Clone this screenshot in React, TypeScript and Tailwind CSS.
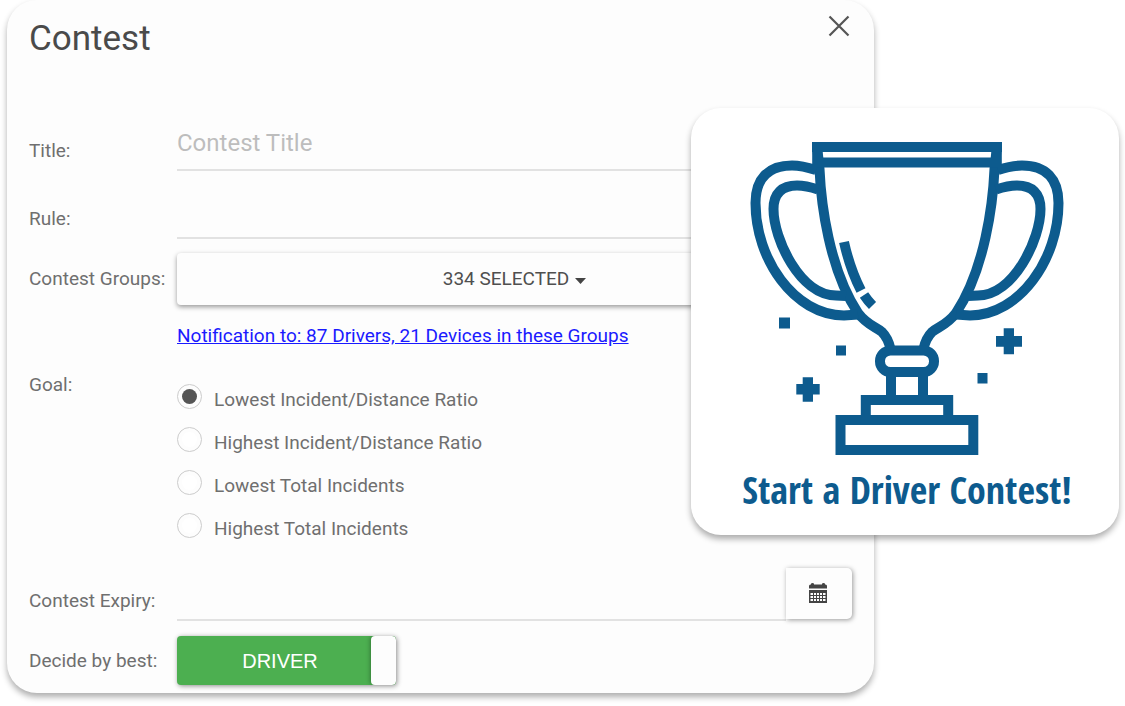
import { useState } from 'react';

const goals = [
  'Lowest Incident/Distance Ratio',
  'Highest Incident/Distance Ratio',
  'Lowest Total Incidents',
  'Highest Total Incidents',
];

const labelClass = 'w-[148px] shrink-0 text-[19px] leading-[26px] text-[#6f6f6f]';
const inputClass =
  'min-w-0 flex-1 border-b-2 border-[#e2e2e2] bg-transparent text-[#555555] outline-none placeholder:text-[#bdbdbd] placeholder:opacity-100';

function CloseIcon() {
  return (
    <svg width="22" height="22" viewBox="0 0 22 22" fill="none" stroke="#555555" strokeWidth="2.2">
      <path d="M1.5 1.5 L20.5 20.5 M20.5 1.5 L1.5 20.5" />
    </svg>
  );
}

function CalendarIcon() {
  return (
    <svg width="18" height="20" viewBox="0 0 18 20" fill="#444444">
      <path d="M0 5.5V3Q0 1.5 1.5 1.5H2V1Q2 0 3.5 0T5 1V1.5H13V1Q13 0 14.5 0T16 1V1.5H16.5Q18 1.5 18 3V5.5Z" />
      <path
        fillRule="evenodd"
        d="M0 7H18V20H0Z M1.5 10V12H4V10Z M5 10V12H7V10Z M8 10V12H10V10Z M11 10V12H13V10Z M14 10V12H16.500V10Z M1.5 13V15H4V13Z M5 13V15H7V13Z M8 13V15H10V13Z M11 13V15H13V13Z M14 13V15H16.500V13Z M1.5 16V18H4V16Z M5 16V18H7V16Z M8 16V18H10V16Z M11 16V18H13V16Z M14 16V18H16.500V16Z"
      />
    </svg>
  );
}

// left half of the cup, mirrored for the right side
function CupSide() {
  return (
    <>
      <path d="M67 5 L69.5 28 C71 62 79 128 108 172 C117 184 126 186 132 191 C137 196 139 201 140.5 208" />
      <path d="M66 29 Q52 24.5 42 24.5 C18 24.5 5.5 38 5.5 62 C5.5 118 44 174 94 174.5 L108 173.5" />
      <path d="M68 48.5 Q56 44.5 47 44.5 C32 44.5 23.5 52 23.5 68 C23.5 98 50 154 86 154.5 L96 155" />
    </>
  );
}

function Trophy() {
  return (
    <svg width="314" height="315" viewBox="0 0 314 315" fill="none" stroke="#0d5b8e" strokeWidth="10">
      <CupSide />
      <g transform="translate(314 0) scale(-1 1)">
        <CupSide />
      </g>
      <path d="M62 6H252 M67 21.5H247 M67.2 1V25 M246.8 1V25" />
      <path d="M94 101 Q100 128 111 149.5 M114 154 Q118 160 122.5 164.5" />
      <rect x="130" y="209.5" width="54" height="21.5" rx="10.5" />
      <path d="M141 233V256 M173 233V256" />
      <rect x="115.8" y="259" width="82.4" height="20" />
      <rect x="90.5" y="279" width="132.8" height="30" />
      <g fill="#0d5b8e" stroke="none">
        <rect x="29" y="176.5" width="11" height="11" />
        <rect x="86" y="204.5" width="10" height="10" />
        <rect x="227.5" y="232" width="10" height="10.5" />
        <path d="M253.7 187.3H264V195H272V205.7H264V213.3H253.7V205.7H246V195H253.7Z" />
        <path d="M52.7 236.3H63V243H69.7V253.5H63V260.7H52.7V253.5H46.3V243H52.7Z" />
      </g>
    </svg>
  );
}

export default function App() {
  const [title, setTitle] = useState('');
  const [rule, setRule] = useState('');
  const [expiry, setExpiry] = useState('');
  const [goal, setGoal] = useState(goals[0]);
  const [byDriver, setByDriver] = useState(true);

  return (
    <div className="flex min-h-screen items-start bg-white pr-[6px] pb-3 pl-[7px] font-['Roboto',sans-serif]">
      <form className="min-w-0 flex-1 rounded-[30px] bg-[#fdfdfd] px-[22px] pb-2 shadow-[0_4px_6px_rgba(0,0,0,0.32)]">
        <header className="flex h-[113px] items-start justify-between pt-[15px]">
          <h1 className="text-[35px] leading-[48px] text-[#4a4a4a]">Contest</h1>
          <button type="button" aria-label="Close" className="mr-0.5">
            <CloseIcon />
          </button>
        </header>

        <div className="flex h-[58px] items-end">
          <label htmlFor="title" className={`${labelClass} pb-[7px]`}>Title:</label>
          <input
            id="title"
            value={title}
            onChange={(e) => setTitle(e.target.value)}
            placeholder="Contest Title"
            className={`${inputClass} h-[58px] pt-1 text-[24px]`}
          />
        </div>

        <div className="flex h-[68px] items-end">
          <label htmlFor="rule" className={`${labelClass} pb-[7px]`}>Rule:</label>
          <input
            id="rule"
            value={rule}
            onChange={(e) => setRule(e.target.value)}
            className={`${inputClass} h-[58px] pt-1 text-[24px]`}
          />
        </div>

        <div className="mt-[14px] flex items-center">
          <label htmlFor="groups" className={labelClass}>Contest Groups:</label>
          <button
            id="groups"
            type="button"
            aria-haspopup="listbox"
            className="flex h-[52px] flex-1 items-center justify-center gap-1.5 rounded bg-[#fdfdfd] text-[19px] text-[#4f4f4f] shadow-[0_2px_5px_rgba(0,0,0,0.4)]"
          >
            334 SELECTED
            <svg width="11" height="6" viewBox="0 0 11 6" fill="#444444" className="mt-1">
              <path d="M0 0H11L5.5 6Z" />
            </svg>
          </button>
        </div>

        <div className="mt-[18px] ml-[148px] text-[19px] leading-[26px]">
          <a href="#groups" className="text-[#1a1aff] underline">
            Notification to: 87 Drivers, 21 Devices in these Groups
          </a>
        </div>

        <div role="radiogroup" aria-labelledby="goal" className="mt-[23px] flex items-start">
          <span id="goal" className={labelClass}>Goal:</span>
          <div className="pt-[3px]">
            {goals.map((item) => (
              <label key={item} className="flex h-[43px] items-center gap-3 text-[19px] text-[#6f6f6f]">
                <input
                  type="radio"
                  name="goal"
                  checked={goal === item}
                  onChange={() => setGoal(item)}
                  className="size-[25px] appearance-none rounded-full border border-[#cccccc] bg-white bg-clip-content p-1 checked:bg-[#555555]"
                />
                <span className="pt-2">{item}</span>
              </label>
            ))}
          </div>
        </div>

        <div className="mt-[21px] flex h-[53px] items-end">
          <label htmlFor="expiry" className={`${labelClass} pb-[7px]`}>Contest Expiry:</label>
          <input
            id="expiry"
            value={expiry}
            onChange={(e) => setExpiry(e.target.value)}
            className={`${inputClass} h-[53px] text-[24px]`}
          />
          <button
            type="button"
            aria-label="Pick a date"
            className="flex h-[51px] w-[66px] items-center justify-center self-start rounded-r-[5px] bg-[#fdfdfd] pr-0.5 pb-0.5 shadow-[1px_1px_5px_rgba(0,0,0,0.4)]"
          >
            <CalendarIcon />
          </button>
        </div>

        <div className="mt-[15px] flex items-center">
          <label htmlFor="decide" className={labelClass}>Decide by best:</label>
          <button
            id="decide"
            type="button"
            role="switch"
            aria-checked={byDriver}
            onClick={() => setByDriver(!byDriver)}
            className="flex h-[49px] w-[219px] items-stretch overflow-hidden rounded bg-[#4caf50] font-['Liberation_Sans',sans-serif] text-[20px] text-white shadow-[1px_1px_5px_rgba(0,0,0,0.45)]"
          >
            <span className="flex flex-1 items-center justify-center pl-3">{byDriver ? 'DRIVER' : 'DEVICE'}</span>
            <span className="w-[25px] rounded bg-[#fdfdfd] shadow-[-1px_0_4px_rgba(0,0,0,0.3)]" />
          </button>
        </div>
      </form>

      <aside className="z-10 mt-[108px] -ml-[183px] flex w-[428px] shrink-0 flex-col items-center rounded-[30px] bg-white pt-[33px] pb-[25px] pl-1 shadow-[0_4px_6px_rgba(0,0,0,0.32)]">
        <Trophy />
        <p className="mt-3 font-['Open_Sans_Condensed','Open_Sans',sans-serif] text-[38px] leading-[42px] font-extrabold whitespace-nowrap text-[#0d5b8e]">
          Start a Driver Contest!
        </p>
      </aside>
    </div>
  );
}
